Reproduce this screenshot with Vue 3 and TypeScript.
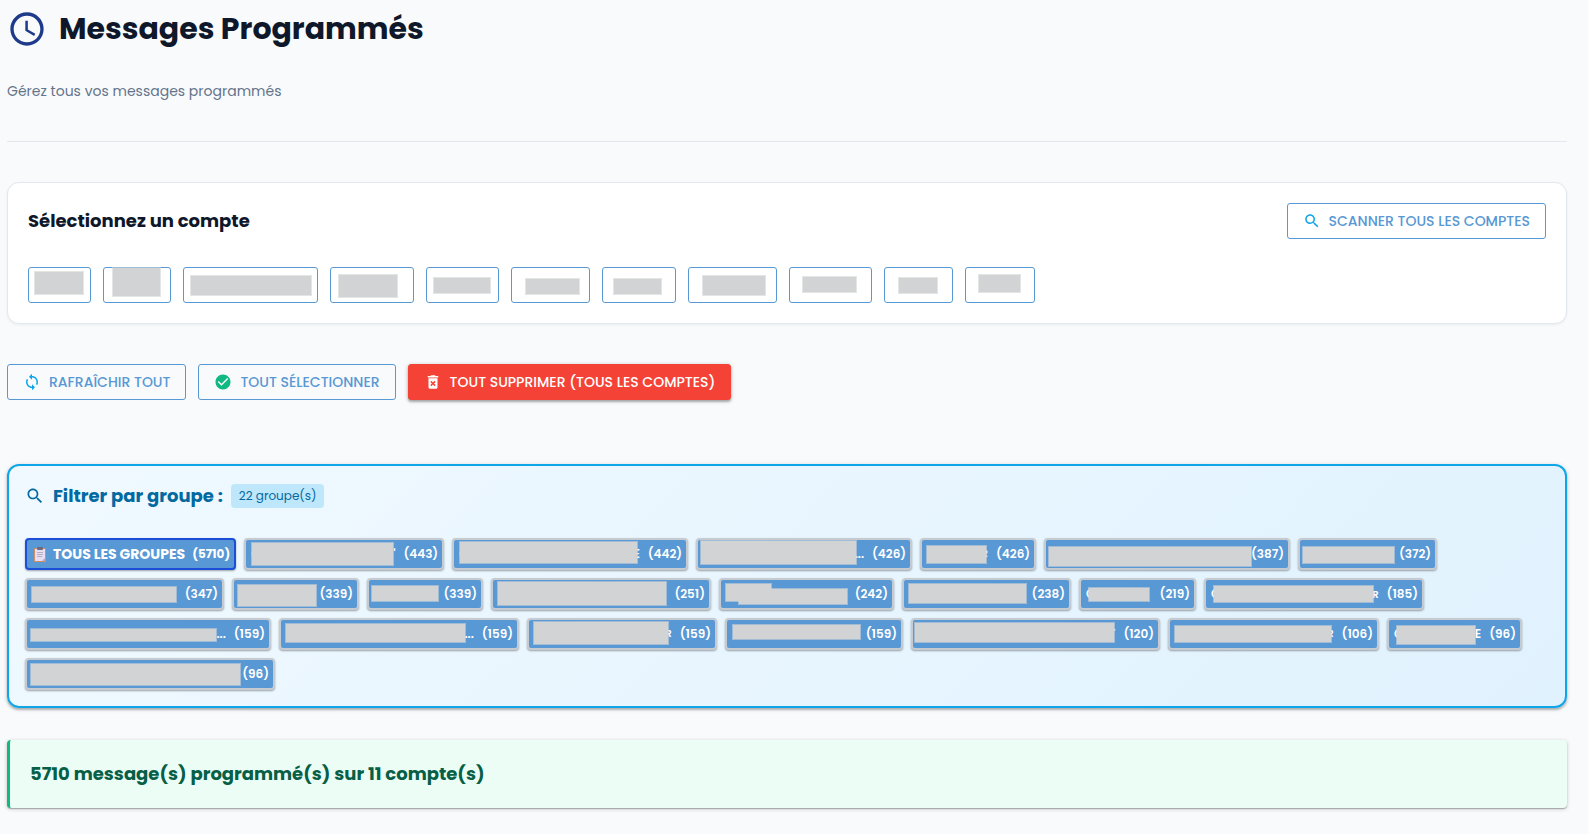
<script setup lang="ts">
interface Mask {
  x: number
  y: number
  w: number
  h: number
}

interface Account {
  width: number
  mask: Mask
}

interface Group {
  count: number
  width: number
  head?: string
  tail?: string
  masks: Mask[]
}

const m = (x: number, y: number, w: number, h: number): Mask => ({ x, y, w, h })

const accounts: Account[] = [
  { width: 63, mask: m(6, 4, 50, 24) },
  { width: 68, mask: m(9, 0, 49, 30) },
  { width: 135, mask: m(7, 8, 122, 21) },
  { width: 84, mask: m(8, 7, 60, 24) },
  { width: 73, mask: m(7, 10, 58, 17) },
  { width: 79, mask: m(14, 11, 55, 17) },
  { width: 74, mask: m(11, 11, 49, 17) },
  { width: 89, mask: m(14, 8, 64, 21) },
  { width: 83, mask: m(13, 9, 55, 17) },
  { width: 69, mask: m(14, 10, 40, 17) },
  { width: 70, mask: m(13, 7, 43, 19) },
]

const groups: Group[] = [
  { count: 443, width: 200, head: 'C', tail: "'", masks: [m(7, 4, 143, 24)] },
  { count: 442, width: 236, head: 'C', tail: 'E', masks: [m(7, 3, 179, 23)] },
  { count: 426, width: 216, tail: '...', masks: [m(4, 2, 157, 25)] },
  { count: 426, width: 116, tail: 'R', masks: [m(6, 7, 61, 19)] },
  { count: 387, width: 246, masks: [m(4, 8, 204, 21)] },
  { count: 372, width: 139, masks: [m(4, 8, 93, 18)] },
  { count: 347, width: 199, masks: [m(6, 8, 146, 17)] },
  { count: 339, width: 127, masks: [m(5, 6, 80, 23)] },
  { count: 339, width: 116, masks: [m(4, 7, 68, 17)] },
  { count: 251, width: 220, masks: [m(6, 3, 170, 25)] },
  { count: 242, width: 175, masks: [m(6, 5, 47, 19), m(19, 10, 110, 17)] },
  { count: 238, width: 169, masks: [m(6, 5, 119, 21)] },
  { count: 219, width: 117, head: 'C', masks: [m(9, 9, 62, 15)] },
  { count: 185, width: 220, head: 'C', tail: 'R', masks: [m(9, 7, 161, 18)] },
  { count: 159, width: 246, tail: '...', masks: [m(5, 10, 187, 14)] },
  { count: 159, width: 240, tail: '...', masks: [m(6, 5, 181, 20)] },
  { count: 159, width: 190, tail: 'R', masks: [m(6, 3, 136, 24)] },
  { count: 159, width: 178, masks: [m(7, 6, 129, 16)] },
  { count: 120, width: 249, tail: 'T', masks: [m(3, 4, 201, 21)] },
  { count: 106, width: 211, tail: 'R', masks: [m(6, 7, 158, 18)] },
  { count: 96, width: 135, head: 'C', tail: 'E', masks: [m(9, 7, 80, 20)] },
  { count: 96, width: 250, masks: [m(5, 5, 211, 23)] },
]

const maskStyle = (k: Mask, border: number) => ({
  left: `${k.x - border}px`,
  top: `${k.y - border}px`,
  width: `${k.w}px`,
  height: `${k.h}px`,
})
</script>

<template>
  <main class="page">
    <header class="head">
      <div class="title-row">
        <svg class="clock" viewBox="0 0 24 24" aria-hidden="true">
          <path d="M11.99 2C6.47 2 2 6.48 2 12s4.47 10 9.99 10C17.52 22 22 17.52 22 12S17.52 2 11.99 2zM12 20c-4.42 0-8-3.58-8-8s3.58-8 8-8 8 3.58 8 8-3.58 8-8 8zm.5-13H11v6l5.25 3.15.75-1.23-4.5-2.67z" />
        </svg>
        <h1>Messages Programmés</h1>
      </div>
      <p class="subtitle">Gérez tous vos messages programmés</p>
    </header>

    <section class="accounts">
      <div class="accounts-top">
        <h2>Sélectionnez un compte</h2>
        <button type="button" class="btn outline">
          <svg class="sky" viewBox="0 0 24 24" aria-hidden="true">
            <path d="M15.5 14h-.79l-.28-.27C15.41 12.59 16 11.11 16 9.5 16 5.91 13.09 3 9.5 3S3 5.91 3 9.5 5.91 16 9.5 16c1.61 0 3.09-.59 4.23-1.57l.27.28v.79l5 4.99L20.49 19l-4.99-5zm-6 0C7.01 14 5 11.99 5 9.5S7.01 5 9.5 5 14 7.01 14 9.5 11.99 14 9.5 14z" />
          </svg>
          SCANNER TOUS LES COMPTES
        </button>
      </div>
      <div class="account-list">
        <button
          v-for="(a, i) in accounts"
          :key="i"
          type="button"
          class="account"
          :aria-label="`Compte ${i + 1}`"
          :style="{ width: `${a.width}px` }"
        >
          <span class="mask" :style="maskStyle(a.mask, 1)"></span>
        </button>
      </div>
    </section>

    <div class="actions">
      <button type="button" class="btn outline">
        <svg class="sky" viewBox="0 0 24 24" aria-hidden="true">
          <path d="M12 4V1L8 5l4 4V6c3.31 0 6 2.69 6 6 0 1.01-.25 1.97-.7 2.8l1.46 1.46C19.54 15.03 20 13.57 20 12c0-4.42-3.58-8-8-8zm0 14c-3.31 0-6-2.69-6-6 0-1.01.25-1.97.7-2.8L5.24 7.74C4.46 8.97 4 10.43 4 12c0 4.42 3.58 8 8 8v3l4-4-4-4v3z" />
        </svg>
        RAFRAÎCHIR TOUT
      </button>
      <button type="button" class="btn outline">
        <svg class="green" viewBox="0 0 24 24" aria-hidden="true">
          <path d="M12 2C6.48 2 2 6.48 2 12s4.48 10 10 10 10-4.48 10-10S17.52 2 12 2zm-2 15l-5-5 1.41-1.41L10 14.17l7.59-7.59L19 8l-9 9z" />
        </svg>
        TOUT SÉLECTIONNER
      </button>
      <button type="button" class="btn danger">
        <svg viewBox="0 0 24 24" aria-hidden="true">
          <path d="M6 19c0 1.1.9 2 2 2h8c1.1 0 2-.9 2-2V7H6v12zm2.46-7.12l1.41-1.41L12 12.59l2.12-2.12 1.41 1.41L13.41 14l2.12 2.12-1.41 1.41L12 15.41l-2.12 2.12-1.41-1.41L10.59 14l-2.13-2.12zM15.5 4l-1-1h-5l-1 1H5v2h14V4z" />
        </svg>
        TOUT SUPPRIMER (TOUS LES COMPTES)
      </button>
    </div>

    <section class="filter">
      <div class="filter-top">
        <svg viewBox="0 0 24 24" aria-hidden="true">
          <path d="M15.5 14h-.79l-.28-.27C15.41 12.59 16 11.11 16 9.5 16 5.91 13.09 3 9.5 3S3 5.91 3 9.5 5.91 16 9.5 16c1.61 0 3.09-.59 4.23-1.57l.27.28v.79l5 4.99L20.49 19l-4.99-5zm-6 0C7.01 14 5 11.99 5 9.5S7.01 5 9.5 5 14 7.01 14 9.5 11.99 14 9.5 14z" />
        </svg>
        <h2>Filtrer par groupe :</h2>
        <span class="badge">22 groupe(s)</span>
      </div>
      <div class="group-list">
        <button type="button" class="group all" aria-pressed="true">
          <svg viewBox="0 0 12 15" aria-hidden="true">
            <rect x="0" y="1" width="12" height="14" rx="1" fill="#d08f6c" />
            <rect x="1" y="2" width="10" height="12" fill="#e6def0" />
            <path d="M8 14l3-3v3z" fill="#b9a9c9" />
            <rect x="3" y="0" width="6" height="3" rx="1" fill="#6f6a80" />
            <path d="M3 5.5h6M3 7.5h6M3 9.5h5" stroke="#a99fbb" stroke-width="0.8" />
          </svg>
          <span>TOUS LES GROUPES</span>
          <span class="total">(5710)</span>
        </button>
        <button
          v-for="(g, i) in groups"
          :key="i"
          type="button"
          class="group"
          :style="{ width: `${g.width}px` }"
        >
          <span class="name">
            <span>{{ g.head }}</span>
            <span :class="{ small: g.tail === 'R' }">{{ g.tail }}</span>
          </span>
          <span>({{ g.count }})</span>
          <span v-for="(k, j) in g.masks" :key="j" class="mask" :style="maskStyle(k, 2)"></span>
        </button>
      </div>
    </section>

    <section class="summary">
      <h2>5710 message(s) programmé(s) sur 11 compte(s)</h2>
    </section>
  </main>
</template>

<style>
body {
  margin: 0;
  background: #f9fafc;
}
</style>

<style scoped>
.page {
  box-sizing: border-box;
  padding: 8px 21px 24px 7px;
  font-family: Poppins, Inter, "Open Sans", sans-serif;
  color: #0f172a;
}

.page * {
  box-sizing: border-box;
}

h1,
h2,
p {
  margin: 0;
}

h2 {
  font-size: 18px;
  line-height: 24px;
  font-weight: 700;
}

button {
  font-family: inherit;
  cursor: pointer;
}

svg {
  flex: none;
  fill: currentColor;
}

.head {
  padding-bottom: 38px;
  border-bottom: 1px solid #e2e8f0;
}

.title-row {
  display: flex;
  align-items: center;
  gap: 12px;
  height: 42px;
}

.clock {
  width: 40px;
  height: 40px;
  color: #1e3a8a;
}

h1 {
  font-size: 30px;
  line-height: 42px;
  font-weight: 700;
}

.subtitle {
  margin-top: 29px;
  font-size: 14px;
  line-height: 24px;
  color: #64748b;
}

.accounts {
  margin-top: 40px;
  padding: 20px;
  border: 1px solid #e2e8f0;
  border-radius: 12px;
  background: #fff;
  box-shadow: 0 1px 3px rgba(0, 0, 0, 0.06);
}

.accounts-top {
  display: flex;
  align-items: center;
  justify-content: space-between;
}

.btn {
  display: inline-flex;
  align-items: center;
  gap: 8px;
  height: 36px;
  padding: 0 15px;
  border: 1px solid #5898d4;
  border-radius: 3px;
  background: transparent;
  color: #5898d4;
  font-size: 14px;
  line-height: 20px;
  font-weight: 500;
  white-space: nowrap;
}

.btn svg {
  width: 18px;
  height: 18px;
}

.btn .sky {
  color: #0ea5e9;
}

.btn .green {
  color: #10b981;
}

.danger {
  border-color: #f44336;
  background: #f44336;
  color: #fff;
  box-shadow: 0 1px 4px rgba(0, 0, 0, 0.25), 0 2px 2px rgba(0, 0, 0, 0.2);
}

.account-list {
  display: flex;
  flex-wrap: wrap;
  gap: 12px;
  margin-top: 28px;
}

.account {
  position: relative;
  height: 36px;
  padding: 0;
  border: 1px solid #5898d4;
  border-radius: 3px;
  background: #fff;
}

.mask {
  position: absolute;
  border: 1px solid rgba(210, 211, 212, 0.6);
  background: #d2d3d4;
  background-clip: padding-box;
}

.actions {
  display: flex;
  flex-wrap: wrap;
  gap: 12px;
  margin-top: 40px;
}

.filter {
  margin-top: 64px;
  padding: 16px;
  border: 2px solid #0ea5e9;
  border-radius: 12px;
  background: linear-gradient(135deg, #f0f9ff, #e0f2fe);
  box-shadow: 0 1px 4px rgba(0, 0, 0, 0.2), 0 2px 2px rgba(0, 0, 0, 0.2);
}

.filter-top {
  display: flex;
  align-items: center;
  gap: 8px;
  height: 28px;
  color: #0369a1;
}

.filter-top svg {
  width: 20px;
  height: 20px;
}

.badge {
  padding: 0 8px;
  border-radius: 4px;
  background: #bfe7fb;
  font-size: 12px;
  line-height: 24px;
}

.group-list {
  display: flex;
  flex-wrap: wrap;
  gap: 8px;
  margin-top: 28px;
}

.group {
  position: relative;
  display: flex;
  align-items: center;
  gap: 8px;
  height: 32px;
  padding: 0 4px 0 5px;
  border: 2px solid #c6cad1;
  border-radius: 4px;
  background: #5898d4;
  color: #fff;
  font-size: 12px;
  line-height: 16px;
  font-weight: 600;
  white-space: nowrap;
  box-shadow: 0 1px 2px rgba(0, 0, 0, 0.35);
}

.name {
  display: flex;
  flex: 1;
  align-items: baseline;
  justify-content: space-between;
}

.small {
  font-size: 10px;
}

.all {
  gap: 7px;
  padding: 0 4px 0 7px;
  border-color: #1d4ed8;
  font-size: 14px;
  font-weight: 700;
}

.all svg {
  width: 12px;
  height: 15px;
}

.total {
  font-size: 12px;
}

.summary {
  margin-top: 32px;
  padding: 22px 20px;
  border-left: 3px solid #10b981;
  border-radius: 4px;
  background: #ecfdf5;
  color: #065f46;
  box-shadow: 0 1px 4px rgba(0, 0, 0, 0.2), 0 1px 1px rgba(0, 0, 0, 0.25);
}
</style>
